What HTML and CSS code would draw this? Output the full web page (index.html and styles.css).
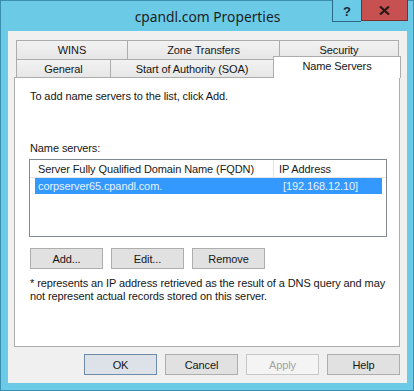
FILE: index.html
```html
<!DOCTYPE html>
<html>
<head>
<meta charset="utf-8">
<link rel="stylesheet" href="styles.css">
</head>
<body>
<div class="window">
  <div class="titlebar">
    <div class="title">cpandl.com Properties</div>
    <div class="controls">
      <div class="btn-help">?</div>
      <div class="btn-close"><svg width="11" height="9" viewBox="0 0 11 9"><path d="M1 0.5 L10 8.5 M10 0.5 L1 8.5" stroke="#2a1a1a" stroke-width="2.2" fill="none"/></svg></div>
    </div>
  </div>
  <div class="client">
    <div class="tabs">
      <div class="tabrow back">
        <div class="tab t-wins">WINS</div>
        <div class="tab t-zone">Zone Transfers</div>
        <div class="tab t-sec">Security</div>
      </div>
      <div class="tabrow front">
        <div class="tab t-gen">General</div>
        <div class="tab t-soa">Start of Authority (SOA)</div>
        <div class="tab t-ns selected">Name Servers</div>
      </div>
    </div>
    <div class="panel">
      <p class="intro">To add name servers to the list, click Add.</p>
      <p class="label">Name servers:</p>
      <div class="list">
        <div class="list-head">
          <div class="col c1">Server Fully Qualified Domain Name (FQDN)</div>
          <div class="col c2">IP Address</div>
        </div>
        <div class="list-row sel">
          <div class="col c1">corpserver65.cpandl.com.</div>
          <div class="col c2">[192.168.12.10]</div>
        </div>
      </div>
      <div class="actions">
        <div class="button">Add...</div>
        <div class="button">Edit...</div>
        <div class="button">Remove</div>
      </div>
      <p class="note">* represents an IP address retrieved as the result of a DNS query and may not represent actual records stored on this server.</p>
    </div>
    <div class="footer">
      <div class="button default">OK</div>
      <div class="button">Cancel</div>
      <div class="button disabled">Apply</div>
      <div class="button">Help</div>
    </div>
  </div>
</div>
</body>
</html>
```
FILE: styles.css
```css
* { box-sizing: border-box; }
html, body { margin: 0; padding: 0; background: #ffffff; }
body { width: 414px; height: 391px; overflow: hidden; font-family: "Liberation Sans", Arial, sans-serif; font-size: 11px; letter-spacing: -0.1px; color: #161616; }

.window {
  width: 414px; height: 391px;
  border: 1px solid #3a8fb0;
  background: #6bcbe7;
  padding: 0 6px 7px 7px;
  display: flex; flex-direction: column;
}
.titlebar {
  position: relative;
  height: 30px;
  display: flex; align-items: center; justify-content: center;
}
.title {
  font-family: "Noto Sans", "Open Sans", sans-serif;
  font-size: 13.8px; letter-spacing: 0; color: #1e1e1e;
  margin-top: 1px;
}
.controls { position: absolute; right: -1px; top: -1px; display: flex; }
.btn-help {
  width: 29px; height: 22px;
  border: 1px solid #2b6a86; border-top: none; border-right: none;
  background: #6bcbe7;
  font-family: "Liberation Sans", Arial, sans-serif; font-weight: bold; font-size: 13px; color: #1a2a3a;
  display: flex; align-items: center; justify-content: center; padding-top: 1px;
}
.btn-close {
  width: 47px; height: 21px;
  border: 1px solid #7d2f2f; border-top: none;
  background: #c75050;
  display: flex; align-items: center; justify-content: center;
}

.client {
  flex: 1;
  background: #f0f0f0;
  padding: 9px 7px 0 6px;
  display: flex; flex-direction: column;
}
.tabs { padding-left: 2px; height: 37px; }
.tabrow { display: flex; }
.tab {
  height: 19px;
  background: linear-gradient(#f2f2f2, #e6e6e6);
  border: 1px solid #acacac; border-bottom: none;
  display: flex; align-items: center; justify-content: center;
  margin-right: -1px;
}
.t-wins { width: 112px; }
.t-zone { width: 153px; }
.t-sec { width: 120px; }
.t-gen { width: 95px; }
.t-soa { width: 164px; }
.t-ns {
  width: 128px; height: 22px; margin-top: -3px;
  background: #ffffff; position: relative; z-index: 2;
  align-items: flex-start; padding-top: 3px;
}

.panel {
  background: #ffffff;
  border: 1px solid #acacac;
  height: 270px;
  padding: 12px 0 0 15px;
  position: relative; z-index: 1;
  width: 386px;
}
.panel p { margin: 0; line-height: 13px; }
.label { margin-top: 39px !important; }
.list {
  margin: 4px 0 0 -1px;
  width: 358px; height: 78px;
  border: 1px solid #828790;
  background: #fff;
  padding: 0 4px 0 5px;
}
.list-head { display: flex; height: 18px; border-bottom: 1px solid #e5e5e5; margin: 0 -4px 0 -5px; padding-left: 8px; }
.list-head .col { display: flex; align-items: center; color: #1a1a1a; }
.list-head .c1 { width: 236px; border-right: 1px solid #e5e5e5; }
.list-head .c2 { padding-left: 5px; }
.list-row { display: flex; height: 16px; align-items: center; }
.list-row.sel { background: #3399ff; color: #e8f2ff; padding-left: 3px; }
.list-row .c1 { width: 239px; }
.list-row .c2 { padding-left: 6px; }

.actions { display: flex; gap: 8px; margin-top: 11px; }
.button {
  width: 73px; height: 21px;
  background: #e1e1e1;
  border: 1px solid #adadad;
  display: flex; align-items: center; justify-content: center;
}
.note { margin-top: 8px !important; width: 364px; }

.footer {
  display: flex; justify-content: flex-end; gap: 8px;
  margin-top: 7px;
}
.button.default { border-color: #6e8ca8; background: #dce2e8; }
.button.disabled { background: #f4f4f4; border-color: #c8c8c8; color: #a3a3a3; }
```
